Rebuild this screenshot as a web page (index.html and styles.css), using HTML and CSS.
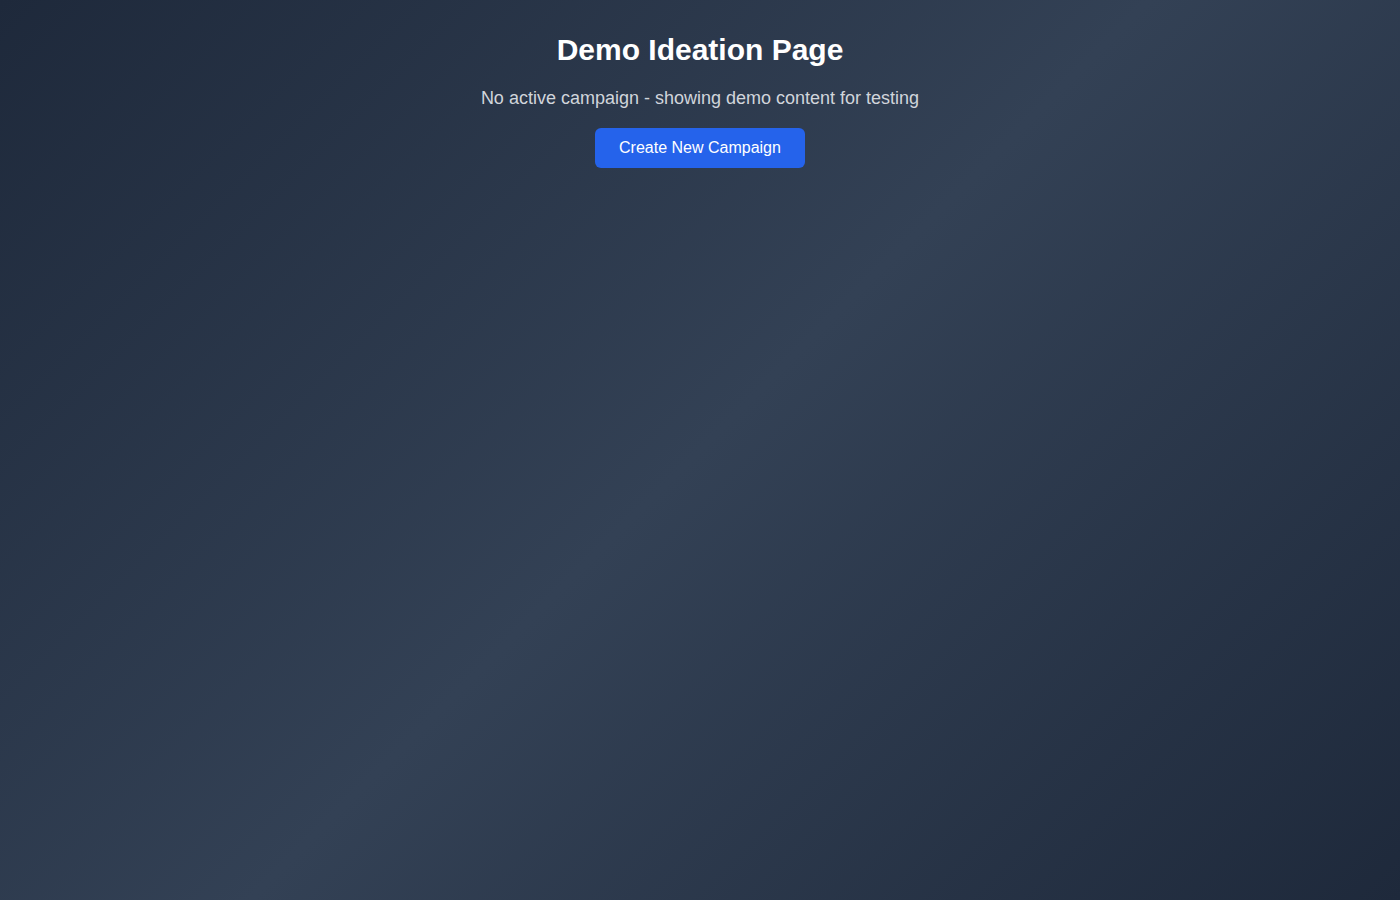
FILE: index.html
```html
<!DOCTYPE html>
<html lang="en">
<head>
<meta charset="utf-8">
<title>Demo Ideation Page</title>
<link rel="stylesheet" href="styles.css">
</head>
<body>
<main class="page">
  <section class="hero">
    <h1 class="title">Demo Ideation Page</h1>
    <p class="subtitle">No active campaign - showing demo content for testing</p>
    <button class="btn-primary" type="button">Create New Campaign</button>
  </section>
</main>
</body>
</html>
```

FILE: styles.css
```css
* { box-sizing: border-box; }
html, body {
  margin: 0;
  padding: 0;
  height: 100%;
}
body {
  font-family: "Liberation Sans", Arial, Helvetica, sans-serif;
  background: linear-gradient(135deg, #1e293b 0%, #334155 50%, #1e293b 100%);
  min-height: 100vh;
  color: #ffffff;
}
.page {
  min-height: 100vh;
  padding: 32px;
}
.hero {
  display: flex;
  flex-direction: column;
  align-items: center;
  text-align: center;
}
.title {
  margin: 0 0 16px;
  font-size: 30px;
  line-height: 36px;
  font-weight: 700;
  color: #ffffff;
}
.subtitle {
  margin: 0 0 16px;
  font-size: 18px;
  line-height: 28px;
  color: #d1d5db;
}
.btn-primary {
  font-family: inherit;
  font-size: 16px;
  line-height: 24px;
  padding: 8px 24px;
  background: #2563eb;
  color: #ffffff;
  border: none;
  border-radius: 6px;
  cursor: pointer;
}
```
